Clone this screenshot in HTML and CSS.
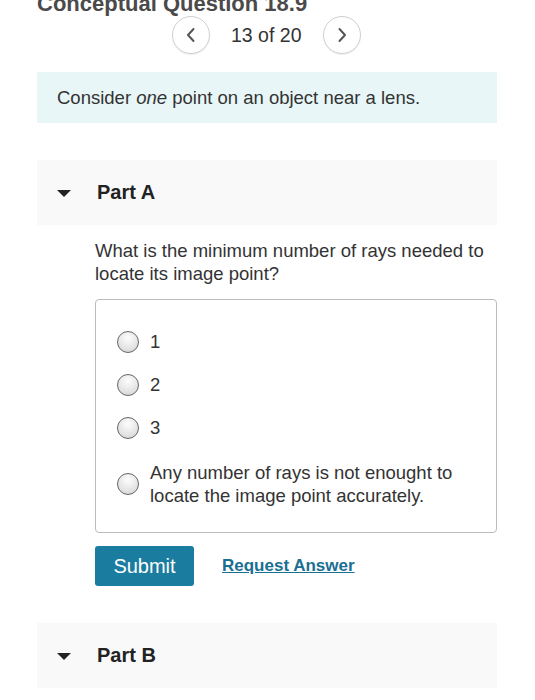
FILE: index.html
```html
<!DOCTYPE html>
<html>
<head>
<meta charset="utf-8">
<link rel="stylesheet" href="styles.css">
</head>
<body>
<div class="page">
  <h1 class="title">Conceptual Question 18.9</h1>
  <div class="pager">
    <span class="circ"><svg width="14" height="16" viewBox="0 0 14 16"><path d="M9.5 2 L4 8 L9.5 14" fill="none" stroke="#555" stroke-width="2" stroke-linecap="round" stroke-linejoin="round"/></svg></span>
    <span class="count">13 of 20</span>
    <span class="circ"><svg width="14" height="16" viewBox="0 0 14 16"><path d="M4.5 2 L10 8 L4.5 14" fill="none" stroke="#555" stroke-width="2" stroke-linecap="round" stroke-linejoin="round"/></svg></span>
  </div>
  <div class="intro"><span>Consider <em>one</em> point on an object near a lens.</span></div>

  <div class="part-head"><span class="tri"></span><span class="part-name">Part A</span></div>
  <div class="part-body">
    <p class="question">What is the minimum number of rays needed to locate its image point?</p>
    <div class="options">
      <label class="opt"><span class="radio"></span><span class="opt-text">1</span></label>
      <label class="opt"><span class="radio"></span><span class="opt-text">2</span></label>
      <label class="opt"><span class="radio"></span><span class="opt-text">3</span></label>
      <label class="opt"><span class="radio"></span><span class="opt-text">Any number of rays is not enought to locate the image point accurately.</span></label>
    </div>
    <div class="actions">
      <button class="submit">Submit</button>
      <a class="request">Request Answer</a>
    </div>
  </div>

  <div class="part-head part-b"><span class="tri"></span><span class="part-name">Part B</span></div>
</div>
</body>
</html>
```
FILE: styles.css
```css
html, body { margin: 0; padding: 0; background: #fff; }
body { font-family: "Liberation Sans", Arial, sans-serif; color: #333; }
.page { width: 460px; margin-left: 37px; }
.title { margin: -7px 0 0 0; font-size: 22px; line-height: 22px; font-weight: bold; color: #4a4a4a; }
.pager { display: flex; align-items: center; margin: 1px 0 0 135px; height: 38px; }
.circ { width: 36px; height: 36px; border: 1px solid #cfcfcf; border-radius: 50%; display: flex; align-items: center; justify-content: center; box-shadow: 0 1px 1px rgba(0,0,0,0.08); }
.count { font-size: 19.5px; color: #333; margin: 0 22px 0 21px; }
.intro { margin-top: 18px; background: #e8f6f7; height: 51px; box-sizing: border-box; padding-left: 20px; display: flex; align-items: center; font-size: 18.5px; color: #333; }
.part-head { margin-top: 37px; background: #f9f9f9; height: 65px; display: flex; align-items: center; padding-left: 20px; }
.tri { width: 0; height: 0; border-left: 7px solid transparent; border-right: 7px solid transparent; border-top: 7px solid #222; margin-right: 26px; margin-top: 1px; }
.part-name { font-size: 20px; font-weight: bold; color: #222; }
.part-body { padding-left: 58px; }
.question { margin: 14px 0 0 0; font-size: 18.5px; line-height: 23px; color: #333; width: 400px; }
.options { margin-top: 14px; border: 1px solid #bcbcbc; border-radius: 4px; padding: 30px 0 25px 21px; display: flex; flex-direction: column; }
.opt { display: flex; align-items: center; font-size: 18.5px; line-height: 23px; color: #333; min-height: 23px; }
.opt + .opt { margin-top: 20px; }
.opt:last-child { margin-top: 22px; }
.radio { flex: none; width: 20px; height: 20px; border: 1.5px solid #666; border-radius: 50%; background: radial-gradient(circle at 50% 30%, #fdfdfd 0%, #e4e4e4 60%, #cfcfcf 100%); margin-right: 11px; }
.opt-text { width: 330px; }
.actions { margin-top: 13px; display: flex; align-items: center; }
.submit { width: 99px; height: 40px; background: #1a7c9e; color: #fff; border: none; border-radius: 3px; font-family: "Liberation Sans", Arial, sans-serif; font-size: 20px; padding: 0; }
.request { margin-left: 28px; font-size: 17px; font-weight: bold; color: #1a6f93; text-decoration: underline; }
.part-b { margin-top: 37px; }
```
